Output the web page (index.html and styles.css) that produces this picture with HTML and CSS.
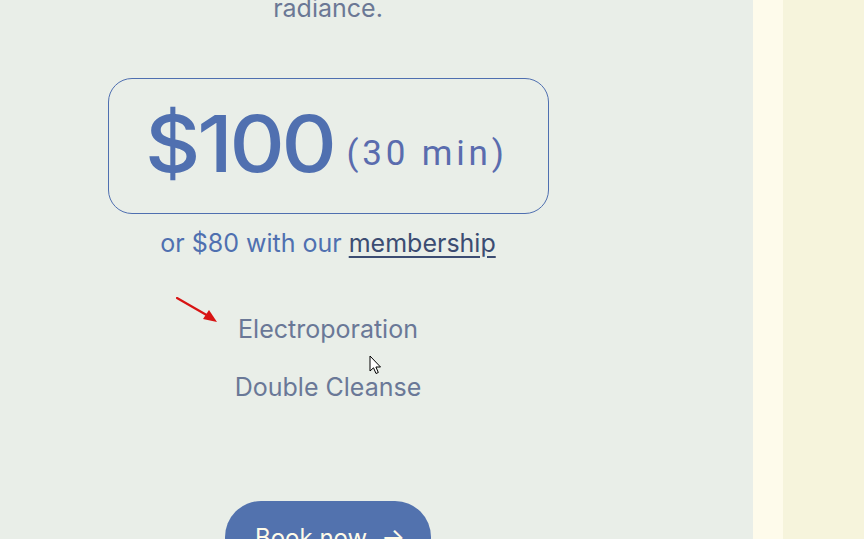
FILE: index.html
```html
<!DOCTYPE html>
<html>
<head>
<meta charset="utf-8">
<link rel="stylesheet" href="styles.css">
</head>
<body>
<div class="page">
  <section class="panel">
    <div class="column">
      <p class="desc">radiance.</p>
      <div class="price-box">
        <span class="price"><span class="price-inner">$100</span></span><span class="duration">(30 min)</span>
      </div>
      <p class="member">or $80 with our <a href="#" class="member-link">membership</a></p>
      <ul class="features">
        <li>Electroporation</li>
        <li>Double Cleanse</li>
      </ul>
      <a href="#" class="book">Book now <span class="arrow">→</span></a>
    </div>
    <svg class="annot-arrow" width="46" height="30" viewBox="0 0 46 30">
      <line x1="1" y1="1" x2="34" y2="20" stroke="#d81414" stroke-width="2.2" stroke-linecap="round"/>
      <polygon points="41,25 27,22 33,13" fill="#d81414"/>
    </svg>
    <svg class="cursor" width="14" height="22" viewBox="0 0 14 22">
      <path d="M1 1 L1 16 L4.5 12.8 L7 18.5 L9.3 17.5 L6.9 12 L11.5 12 Z" fill="#fff" stroke="#000" stroke-width="1" stroke-linejoin="round"/>
    </svg>
  </section>
  <div class="strip"></div>
  <div class="side"></div>
</div>
</body>
</html>
```

FILE: styles.css
```css
* { box-sizing: border-box; }
html, body { margin: 0; padding: 0; }
body {
  font-family: Inter, "Noto Sans", sans-serif;
  overflow: hidden;
  height: 539px;
}
.page {
  display: flex;
  height: 539px;
}
.panel {
  position: relative;
  width: 753px;
  flex: none;
  background: #e9eee8;
}
.column {
  width: 656px;
  display: flex;
  flex-direction: column;
  align-items: center;
}
.desc {
  margin: -7px 0 0;
  font-size: 25px;
  line-height: 30px;
  color: #6b7895;
}
.price-box {
  margin-top: 55px;
  width: 441px;
  height: 136px;
  border: 1px solid #4f6fb0;
  border-radius: 24px;
  text-align: center;
  padding-top: 26px;
  font-size: 78px;
  line-height: 78px;
  white-space: nowrap;
}
.price {
  display: inline-block;
  width: 190px;
  text-align: left;
  font-weight: 500;
  color: #5070b0;
}
.price-inner {
  display: inline-block;
  margin-left: -4px;
  letter-spacing: -3px;
  transform: scaleX(1.1);
  transform-origin: left center;
}
.duration {
  display: inline-block;
  margin-left: 8px;
  width: 161px;
  text-align: left;
  font-family: Roboto, sans-serif;
  font-size: 35px;
  line-height: 35px;
  letter-spacing: 3.8px;
  color: #5a6cae;
  vertical-align: 7px;
}
.member {
  margin: 14px 0 0;
  font-size: 25px;
  line-height: 30px;
  color: #4f70b0;
}
.member-link {
  color: #3b4c72;
  text-decoration: underline;
  text-underline-offset: 4px;
  text-decoration-thickness: 2px;
}
.features {
  list-style: none;
  margin: 56px 0 0;
  padding: 0;
  display: flex;
  flex-direction: column;
  align-items: center;
  gap: 28px;
}
.features li {
  font-size: 25px;
  line-height: 30px;
  color: #6a7897;
}
.book {
  margin-top: 99px;
  width: 206px;
  height: 72px;
  flex: none;
  border-radius: 36px;
  background: #5272ae;
  color: #fffbe8;
  font-size: 24px;
  text-decoration: none;
  display: flex;
  align-items: center;
  justify-content: center;
  gap: 14px;
  padding-left: 4px;
}
.arrow { font-size: 25px; }
.annot-arrow {
  position: absolute;
  left: 176px;
  top: 297px;
}
.cursor {
  position: absolute;
  left: 369px;
  top: 355px;
}
.strip {
  width: 30px;
  flex: none;
  background: #fefbeb;
}
.side {
  flex: 1;
  background: #f6f4dc;
}
```
